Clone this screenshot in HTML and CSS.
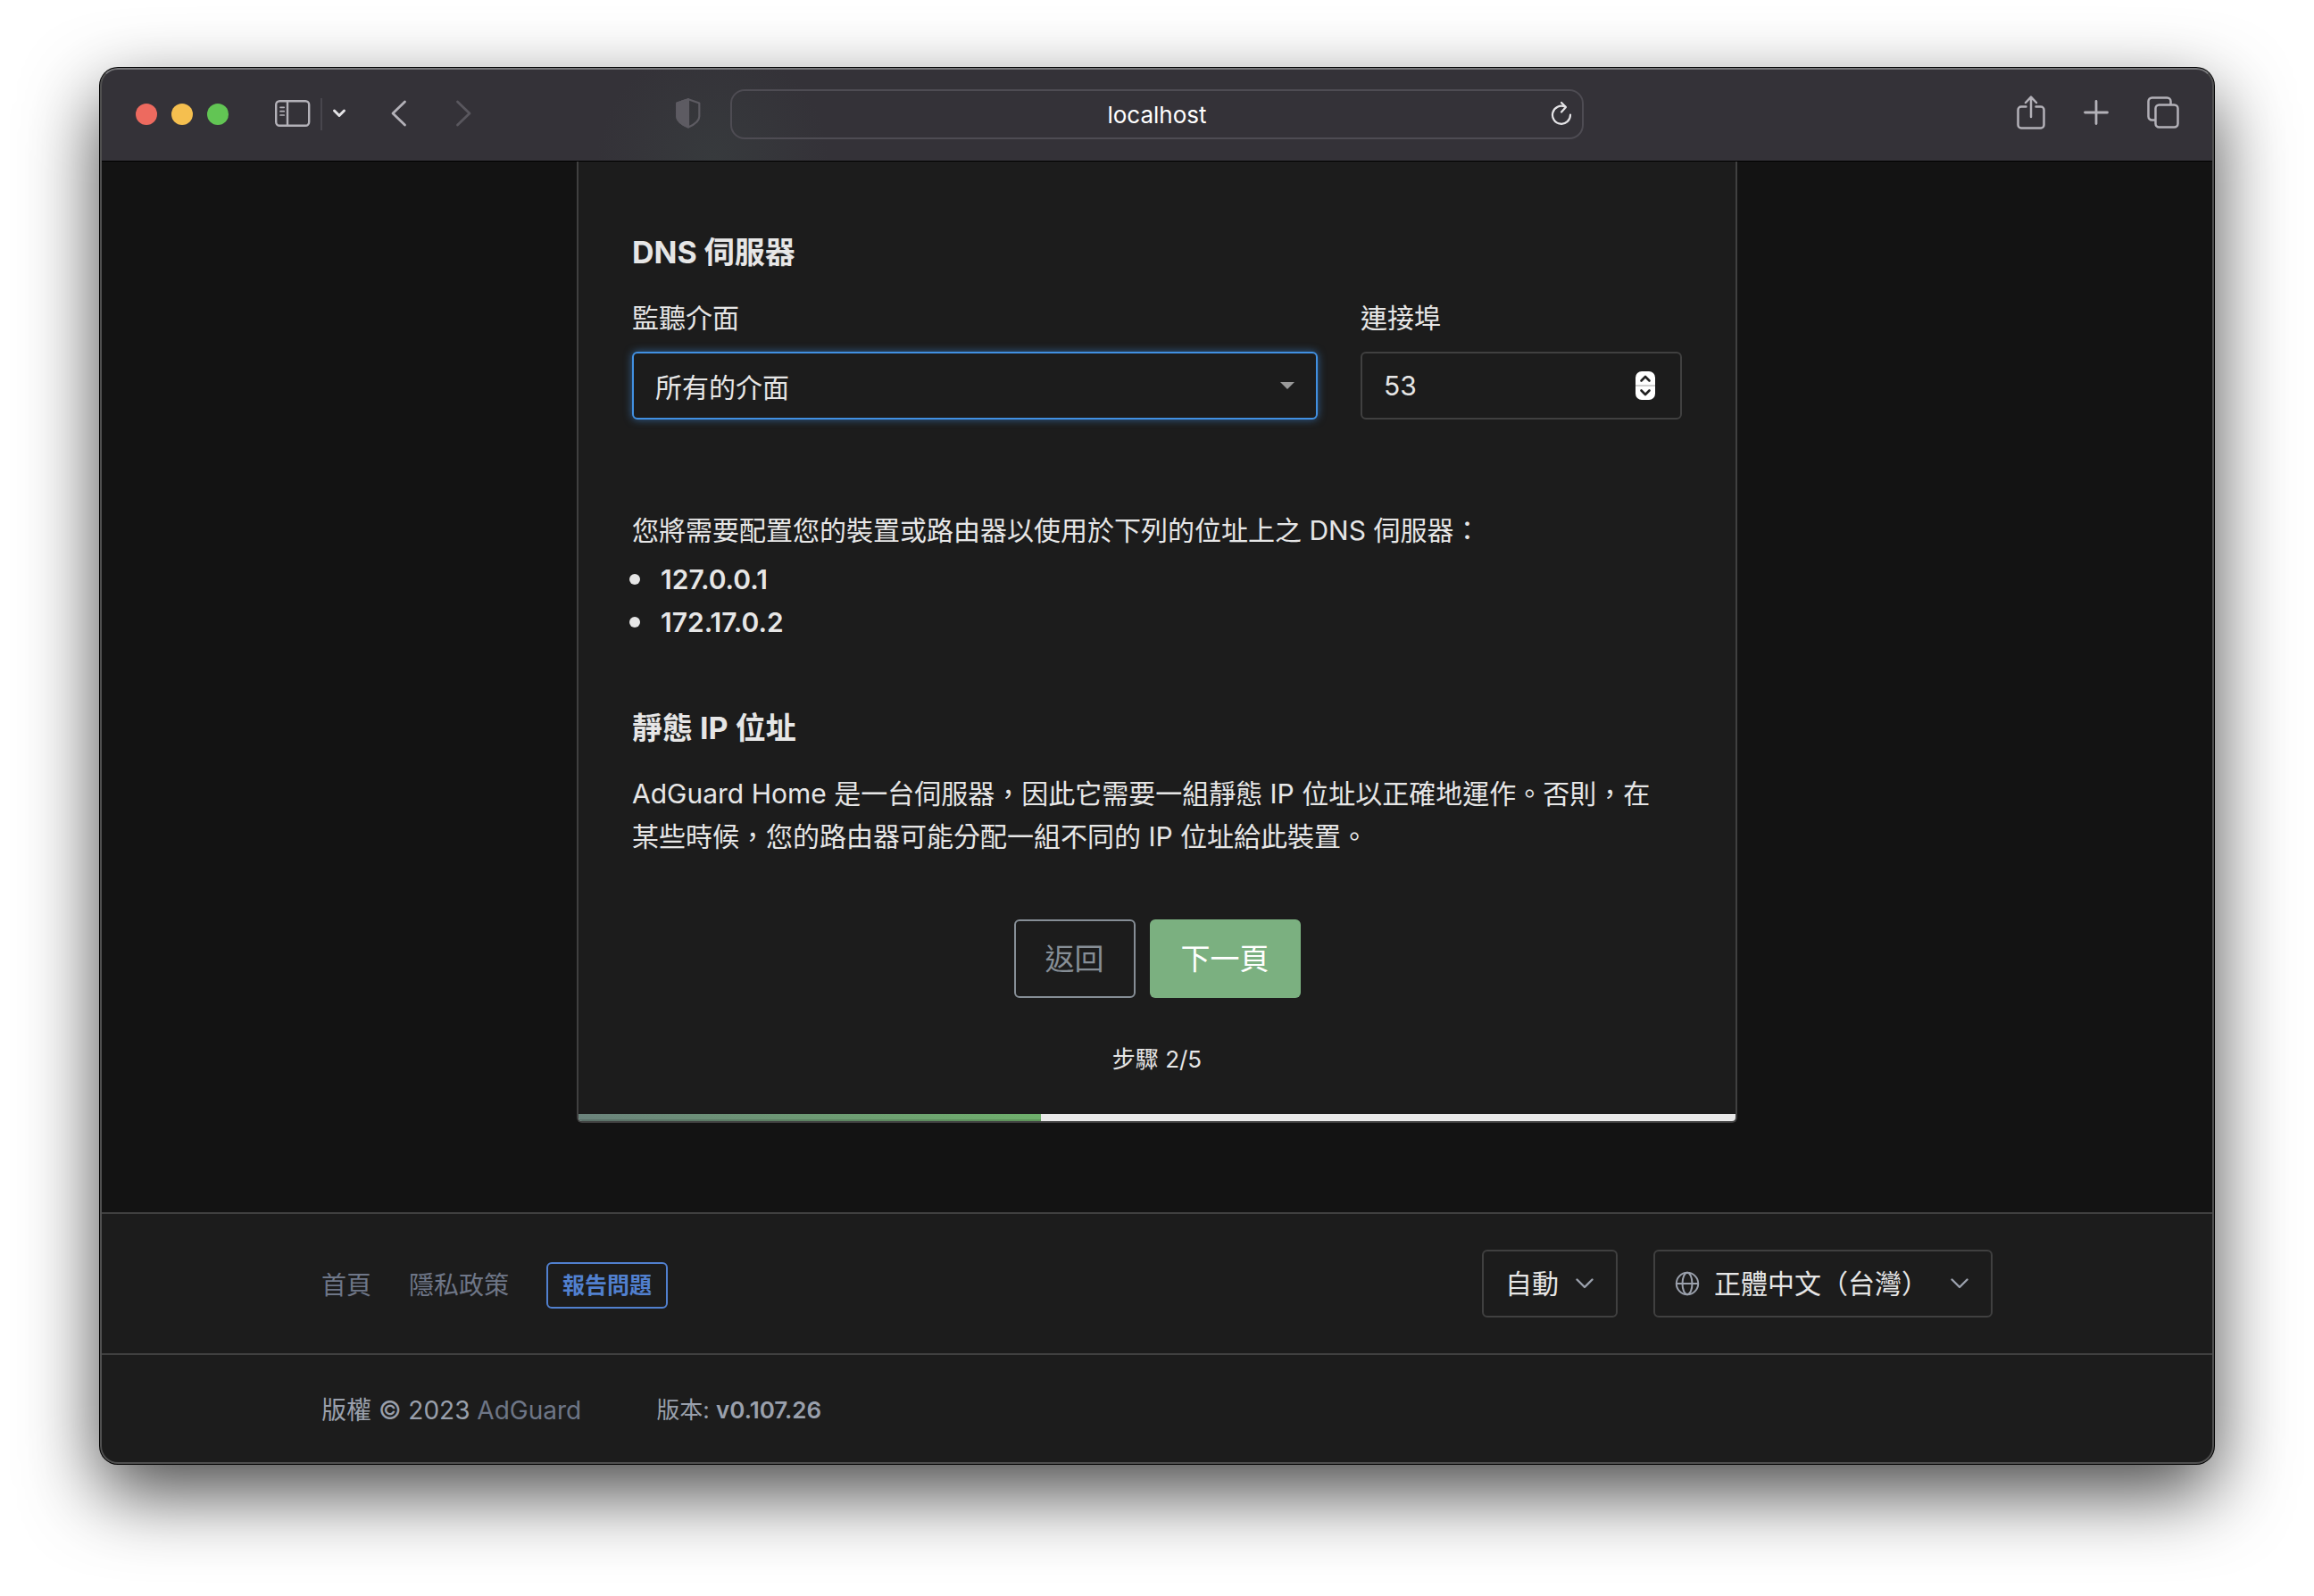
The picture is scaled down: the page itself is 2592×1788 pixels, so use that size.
FILE: index.html
```html
<!DOCTYPE html>
<html lang="zh-Hant-TW">
<head>
<meta charset="utf-8">
<meta name="viewport" content="width=device-width, initial-scale=1">
<title>AdGuard Home</title>
<link rel="stylesheet" href="styles.css">
</head>
<body>
<div class="window">
  <header class="toolbar">
    <div class="toolbar-side">
      <div class="lights">
        <span class="light light-close"></span>
        <span class="light light-min"></span>
        <span class="light light-max"></span>
      </div>
      <div class="sidebar-group">
        <button class="tool" type="button" aria-label="側邊欄">
          <svg width="40" height="30" viewBox="0 0 40 30" fill="none" stroke="currentColor" stroke-width="2.4" stroke-linecap="round"><rect x="1.2" y="1.2" width="37" height="27.6" rx="4"/><path d="M14 1.5v27"/><path d="M6 8.3h4.200M6 12.700h4.200M6 17h4.200" stroke-width="1.700"/></svg>
        </button>
        <span class="divider"></span>
        <button class="tool tool-bright" type="button" aria-label="選單">
          <svg width="16" height="12" viewBox="0 0 16 12" fill="none" stroke="currentColor" stroke-width="3" stroke-linecap="round" stroke-linejoin="round"><path d="M2.500 3 8 8.500 13.500 3"/></svg>
        </button>
      </div>
      <div class="history">
        <button class="tool" type="button" aria-label="上一頁">
          <svg width="18" height="30" viewBox="0 0 18 30" fill="none" stroke="currentColor" stroke-width="2.800" stroke-linecap="round" stroke-linejoin="round"><path d="M15.500 2 2 15l13.500 13"/></svg>
        </button>
        <button class="tool tool-dim" type="button" aria-label="下一頁">
          <svg width="18" height="30" viewBox="0 0 18 30" fill="none" stroke="currentColor" stroke-width="2.800" stroke-linecap="round" stroke-linejoin="round"><path d="M2.500 2 16 15 2.500 28"/></svg>
        </button>
      </div>
      <button class="tool tool-shield" type="button" aria-label="隱私報告">
        <svg width="28" height="34" viewBox="0 0 28 34" fill="none" stroke="currentColor" stroke-width="2.200" stroke-linejoin="round"><path d="M14 1.200 26.300 5.500V20.500C26.300 26 21 29.500 14 32.500 7 29.500 1.300 26 1.300 20.500V5.500z"/><path d="M14 1.200V32.500C7 29.500 1.300 26 1.300 20.500V5.500z" fill="currentColor"/></svg>
      </button>
    </div>
    <div class="address">
      <span>localhost</span>
      <button class="tool tool-bright address-reload" type="button" aria-label="重新載入">
        <svg width="24" height="28" viewBox="0 0 24 28" fill="none" stroke="currentColor" stroke-width="2.200" stroke-linecap="round" stroke-linejoin="round"><path d="M16 6.600A10 10 0 1 0 22 15.500"/><path d="M12 2l5 5-5 5.500"/></svg>
      </button>
    </div>
    <div class="toolbar-side toolbar-end">
      <button class="tool" type="button" aria-label="分享">
        <svg width="32" height="38" viewBox="0 0 32 38" fill="none" stroke="currentColor" stroke-width="2.500" stroke-linecap="round" stroke-linejoin="round"><path d="M10.500 12.500H5a3.500 3.500 0 0 0-3.500 3.500v17A3.500 3.500 0 0 0 5 36.500h22a3.500 3.500 0 0 0 3.500-3.500V16a3.500 3.500 0 0 0-3.500-3.500h-5.500"/><path d="M16 24V2M10 8l6-6.300L22 8"/></svg>
      </button>
      <button class="tool" type="button" aria-label="新增分頁">
        <svg width="28" height="28" viewBox="0 0 28 28" fill="none" stroke="currentColor" stroke-width="2.800" stroke-linecap="round"><path d="M14 1.500v25M1.500 14h25"/></svg>
      </button>
      <button class="tool" type="button" aria-label="分頁概覽">
        <svg width="36" height="36" viewBox="0 0 36 36" fill="none" stroke="currentColor" stroke-width="2.500" stroke-linejoin="round"><rect x="9.500" y="9.500" width="25" height="25" rx="4"/><path d="M9.500 26.500H5.500a4 4 0 0 1-4-4V5.500a4 4 0 0 1 4-4h17a4 4 0 0 1 4 4v4"/></svg>
      </button>
    </div>
  </header>

  <main class="page">
    <form class="card">
      <div class="card-body">
        <h3 class="subtitle">DNS 伺服器</h3>
        <div class="fields">
          <div class="field field-wide">
            <label for="iface">監聽介面</label>
            <div class="control">
              <select id="iface" class="input input-focus"><option>所有的介面</option></select>
              <svg class="caret" width="16" height="8" viewBox="0 0 16 8" fill="#999"><path d="M0 0h16L8 8z"/></svg>
            </div>
          </div>
          <div class="field">
            <label for="port">連接埠</label>
            <div class="control">
              <input id="port" class="input" type="number" value="53">
              <svg class="spinner" width="22" height="32" viewBox="0 0 22 32" fill="none"><rect width="22" height="32" rx="7" fill="#fff"/><path d="M0 16h22" stroke="#d0d0d0" stroke-width="2"/><path d="M6.500 10.500 11 6l4.500 4.500M6.500 21.500 11 26l4.500-4.500" stroke="#222" stroke-width="2.600" stroke-linecap="round" stroke-linejoin="round"/></svg>
            </div>
          </div>
        </div>
        <p class="text">您將需要配置您的裝置或路由器以使用於下列的位址上之 DNS 伺服器：</p>
        <ul class="addresses">
          <li>127.0.0.1</li>
          <li>172.17.0.2</li>
        </ul>
        <h3 class="subtitle">靜態 IP 位址</h3>
        <p class="text">AdGuard Home 是一台伺服器，因此它需要一組靜態 IP 位址以正確地運作。否則，在某些時候，您的路由器可能分配一組不同的 IP 位址給此裝置。</p>
        <div class="actions">
          <button class="btn btn-outline" type="button">返回</button>
          <button class="btn btn-success" type="button">下一頁</button>
        </div>
        <div class="step">步驟 2/5</div>
      </div>
      <div class="progress"><div class="progress-bar" style="width: 40%"></div></div>
    </form>
  </main>

  <footer>
    <div class="footer-row">
      <div class="container">
        <nav class="links">
          <a href="#home">首頁</a>
          <a href="#privacy">隱私政策</a>
          <a class="report" href="#issue">報告問題</a>
        </nav>
        <div class="selects">
          <div class="control">
            <select class="input theme" aria-label="佈景主題"><option>自動</option></select>
            <svg class="chevron" width="20" height="12" viewBox="0 0 20 12" fill="none" stroke="#9aa0ac" stroke-width="2.400" stroke-linecap="round" stroke-linejoin="round"><path d="M1.500 1.500 10 10l8.500-8.500"/></svg>
          </div>
          <div class="control">
            <svg class="globe" width="28" height="28" viewBox="0 0 28 28" fill="none" stroke="#9aa0ac" stroke-width="2"><circle cx="14" cy="14" r="12.200"/><ellipse cx="14" cy="14" rx="5.500" ry="12.200"/><path d="M2 14h24"/></svg>
            <select class="input language" aria-label="語言"><option>正體中文（台灣）</option></select>
            <svg class="chevron" width="20" height="12" viewBox="0 0 20 12" fill="none" stroke="#9aa0ac" stroke-width="2.400" stroke-linecap="round" stroke-linejoin="round"><path d="M1.500 1.500 10 10l8.500-8.500"/></svg>
          </div>
        </div>
      </div>
    </div>
    <div class="footer-row footer-legal">
      <div class="container">
        <div class="copyright">版權 © 2023 <a href="#adguard">AdGuard</a></div>
        <div class="version">版本: <strong>v0.107.26</strong></div>
      </div>
    </div>
  </footer>
</div>
</body>
</html>
```
FILE: styles.css
```css
* {
  box-sizing: border-box;
}

body {
  margin: 0;
  padding: 76px 112px 148px;
  background: #fff;
  color: #e6e6e6;
  font: 30px/48px Inter, "Noto Sans CJK TC", sans-serif;
}

h3,
p,
ul {
  margin: 0;
}

a {
  color: #6e7687;
  text-decoration: none;
}

button,
input,
select {
  font: inherit;
}

.window {
  position: relative;
  overflow: hidden;
  border-radius: 20px;
  background: #131313;
  box-shadow: 0 0 0 1px #000, 0 32px 84px rgba(0, 0, 0, 0.72);
}

/* Light hairline drawn over the window's edge */
.window::after {
  content: "";
  position: absolute;
  inset: 0;
  border: 2px solid #505050;
  border-top-color: #77777a;
  border-radius: 20px;
  pointer-events: none;
}

/* Browser toolbar */
.toolbar {
  display: grid;
  grid-template-columns: 1fr minmax(0, 956px) 1fr;
  align-items: center;
  padding: 24px 0;
  border-bottom: 1px solid #000;
  background: radial-gradient(circle at 29% 100%, #373a3d, #343238 130px);
}

.toolbar-side {
  display: flex;
  align-items: center;
  padding: 0 33px 0 40px;
}

.toolbar-end {
  justify-content: flex-end;
  gap: 43px;
  padding: 0 39px 2px 0;
}

.lights {
  display: flex;
  gap: 16px;
  margin-right: 52px;
}

.light {
  width: 24px;
  height: 24px;
  border-radius: 50%;
}

.light-close {
  background: #ed6a5f;
}

.light-min {
  background: #f5bf4f;
}

.light-max {
  background: #62c554;
}

.tool {
  display: flex;
  margin-bottom: 2px;
  padding: 0;
  border: 0;
  background: none;
  color: #b3b1b8;
}

.tool-bright {
  color: #e4e3e6;
}

.tool-dim {
  color: #59575e;
}

.tool-shield {
  margin-left: auto;
  color: #5d5b62;
}

.sidebar-group {
  display: flex;
  align-items: center;
  gap: 11px;
  margin-right: 50px;
}

.divider {
  width: 2px;
  height: 36px;
  background: #48464d;
}

.history {
  display: flex;
  gap: 54px;
}

.address {
  position: relative;
  display: flex;
  justify-content: center;
  padding: 3px 0 1px;
  border: 2px solid #4e4c53;
  border-radius: 16px;
  color: #fff;
  font-size: 26px;
}

.address-reload {
  position: absolute;
  top: 11px;
  right: 11px;
}

/* Installation card */
.page {
  padding: 0 32px 100px;
}

.card {
  max-width: 1300px;
  margin: 0 auto;
  overflow: hidden;
  border: 2px solid #404040;
  border-top: 0;
  border-radius: 0 0 6px 6px;
  background: #1c1c1c;
}

.card-body {
  padding: 74px 60px 37px;
}

.subtitle {
  margin-bottom: 21px;
  font-size: 34px;
  font-weight: 700;
  line-height: 56px;
}

.text {
  padding-right: 16px;
}

.fields {
  display: grid;
  grid-template-columns: repeat(3, 1fr);
  gap: 48px;
  margin-bottom: 100px;
}

.field {
  display: flex;
  flex-direction: column;
  gap: 14px;
}

.field-wide {
  grid-column: span 2;
}

.control {
  position: relative;
}

.input {
  display: block;
  width: 100%;
  height: 76px;
  padding: 0 24px;
  border: 2px solid #404040;
  border-radius: 6px;
  outline: 0;
  background: #1c1c1c;
  color: #e6e6e6;
  appearance: none;
}

.input[type="number"] {
  appearance: textfield;
}

.input-focus {
  padding-top: 4px;
  border-color: #4190e2;
  box-shadow: 0 0 10px rgba(65, 144, 226, 0.6);
}

.caret,
.spinner,
.chevron,
.globe {
  position: absolute;
  top: 50%;
  transform: translateY(-50%);
  pointer-events: none;
}

.caret {
  right: 26px;
}

.spinner {
  right: 30px;
}

.chevron {
  right: 27px;
}

.globe {
  left: 24px;
}

.addresses {
  margin: 7px 0 67px -3px;
  padding: 0;
  list-style: none;
  font-weight: 600;
}

.addresses li {
  display: flex;
  align-items: center;
  gap: 23px;
}

.addresses li::before {
  content: "";
  width: 12px;
  height: 12px;
  border-radius: 50%;
  background: currentColor;
}

.actions {
  display: flex;
  justify-content: center;
  gap: 16px;
  margin: 69px 0 45px;
}

.btn {
  height: 88px;
  padding: 0 33px;
  border: 2px solid transparent;
  border-radius: 6px;
  font-size: 33px;
}

.btn-outline {
  border-color: #868e96;
  background: none;
  color: #868e96;
}

.btn-success {
  background: #7bb080;
  color: #fff;
}

.step {
  font-size: 26px;
  text-align: center;
}

.progress {
  height: 8px;
  background: #e9e9e9;
}

.progress-bar {
  height: 100%;
  background: linear-gradient(90deg, #6b837c, #6fb06c);
  box-shadow: inset 0 -2px rgba(0, 0, 0, 0.15);
}

/* Footer */
.footer-row {
  padding: 40px 32px;
  border-top: 2px solid #404040;
  background: #1c1c1c;
  color: #9aa0ac;
}

.footer-legal {
  padding: 38px 32px 36px;
}

.container {
  display: flex;
  align-items: center;
  max-width: 1872px;
  margin: 0 auto;
  font-size: 28px;
}

.links {
  display: flex;
  align-items: center;
  gap: 42px;
  padding-top: 4px;
}

.report {
  padding: 0 16px;
  border: 2px solid #5180cf;
  border-radius: 6px;
  color: #5180cf;
  font-size: 25px;
  font-weight: 600;
}

.selects {
  display: flex;
  gap: 40px;
  margin-left: auto;
  font-size: 30px;
}

.theme {
  width: 152px;
}

.language {
  width: 380px;
  padding-left: 66px;
}

.copyright {
  margin-right: 84px;
}

.version {
  font-size: 26px;
}

.version strong {
  font-weight: 600;
}
```
